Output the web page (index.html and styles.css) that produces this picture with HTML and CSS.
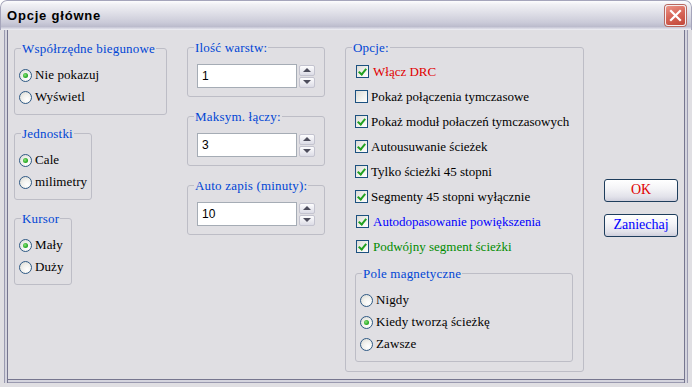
FILE: index.html
```html
<!DOCTYPE html>
<html lang="pl">
<head>
    <meta charset="UTF-8">
    <title>Opcje główne</title>
    <link rel="stylesheet" href="styles.css">
</head>
<body>
    <div class="window">
        <!-- Title bar -->
        <div class="title-bar">
            <span class="title-text">Opcje główne</span>
            <span class="close-button">
                <svg width="13" height="13" viewBox="0 0 13 13">
                    <path d="M2 2 L11 11 M11 2 L2 11" stroke="#fff" stroke-width="2.2" stroke-linecap="square"/>
                </svg>
            </span>
        </div>

        <div class="client">
            <!-- Left column -->
            <div class="column column-left">
                <fieldset class="group group-small group-polar">
                    <legend>Współrzędne biegunowe</legend>
                    <label class="radio-row"><span class="radio checked"></span>Nie pokazuj</label>
                    <label class="radio-row"><span class="radio"></span>Wyświetl</label>
                </fieldset>
                <fieldset class="group group-small group-units">
                    <legend>Jednostki</legend>
                    <label class="radio-row"><span class="radio checked"></span>Cale</label>
                    <label class="radio-row"><span class="radio"></span>milimetry</label>
                </fieldset>
                <fieldset class="group group-small group-cursor">
                    <legend>Kursor</legend>
                    <label class="radio-row"><span class="radio checked"></span>Mały</label>
                    <label class="radio-row"><span class="radio"></span>Duży</label>
                </fieldset>
            </div>

            <!-- Middle column -->
            <div class="column column-middle">
                <fieldset class="group group-spin">
                    <legend>Ilość warstw:</legend>
                    <div class="spin-row">
                        <input type="text" class="spin-input" value="1">
                        <div class="spin-buttons">
                            <span class="spin-button"><span class="arrow-up"></span></span>
                            <span class="spin-button"><span class="arrow-down"></span></span>
                        </div>
                    </div>
                </fieldset>
                <fieldset class="group group-spin">
                    <legend>Maksym. łączy:</legend>
                    <div class="spin-row">
                        <input type="text" class="spin-input" value="3">
                        <div class="spin-buttons">
                            <span class="spin-button"><span class="arrow-up"></span></span>
                            <span class="spin-button"><span class="arrow-down"></span></span>
                        </div>
                    </div>
                </fieldset>
                <fieldset class="group group-spin">
                    <legend>Auto zapis (minuty):</legend>
                    <div class="spin-row">
                        <input type="text" class="spin-input" value="10">
                        <div class="spin-buttons">
                            <span class="spin-button"><span class="arrow-up"></span></span>
                            <span class="spin-button"><span class="arrow-down"></span></span>
                        </div>
                    </div>
                </fieldset>
            </div>

            <!-- Options column -->
            <div class="column column-options">
                <fieldset class="group group-options">
                    <legend>Opcje:</legend>
                    <label class="check-row shifted text-red"><span class="checkbox checked"></span>Włącz DRC</label>
                    <label class="check-row"><span class="checkbox"></span>Pokaż połączenia tymczasowe</label>
                    <label class="check-row"><span class="checkbox checked"></span>Pokaż moduł połaczeń tymczasowych</label>
                    <label class="check-row"><span class="checkbox checked"></span>Autousuwanie ścieżek</label>
                    <label class="check-row"><span class="checkbox checked"></span>Tylko ścieżki 45 stopni</label>
                    <label class="check-row"><span class="checkbox checked"></span>Segmenty 45 stopni wyłącznie</label>
                    <label class="check-row shifted text-blue"><span class="checkbox checked"></span>Autodopasowanie powiększenia</label>
                    <label class="check-row shifted text-green"><span class="checkbox checked"></span>Podwójny segment ścieżki</label>

                    <fieldset class="group group-small group-magnet">
                        <legend>Pole magnetyczne</legend>
                        <label class="radio-row"><span class="radio"></span>Nigdy</label>
                        <label class="radio-row"><span class="radio checked"></span>Kiedy tworzą ścieżkę</label>
                        <label class="radio-row"><span class="radio"></span>Zawsze</label>
                    </fieldset>
                </fieldset>
            </div>

            <!-- Buttons -->
            <div class="column column-buttons">
                <button class="dialog-button text-red">OK</button>
                <button class="dialog-button text-blue">Zaniechaj</button>
            </div>
        </div>
    </div>
</body>
</html>
```

FILE: styles.css
```css
* {
    margin: 0;
    padding: 0;
    box-sizing: border-box;
}

body {
    width: 692px;
    height: 387px;
    overflow: hidden;
    background-color: #ffffff;
    font-family: "Liberation Serif", "Times New Roman", serif;
    font-size: 13px;
    color: #000;
}

.window {
    width: 692px;
    height: 387px;
    display: flex;
    flex-direction: column;
    border-radius: 7px 7px 0 0;
    overflow: hidden;
    background-color: #e0dfe3;
}

/* Title bar */
.title-bar {
    height: 30px;
    flex-shrink: 0;
    display: flex;
    align-items: center;
    justify-content: space-between;
    padding: 0 5px 1px 6px;
    background: linear-gradient(#fdfdfe 0%, #f0f0f4 12%, #e0e0e8 40%, #cacad8 75%, #bcbccd 88%, #d6d6e2 94%, #f2f2f6 100%);
    border: 1px solid #a5a5bb;
    border-bottom: none;
    border-radius: 7px 7px 0 0;
}

.title-text {
    font-family: "Liberation Sans", Arial, sans-serif;
    font-weight: bold;
    font-size: 13px;
    letter-spacing: 0.8px;
}

.close-button {
    width: 21px;
    height: 21px;
    display: flex;
    align-items: center;
    justify-content: center;
    border: 1px solid #f4eeee;
    border-radius: 3px;
    background: linear-gradient(160deg, #eb9487 0%, #d8685a 45%, #c24638 100%);
    box-shadow: 0 0 0 1px #b86860;
}

/* Client area */
.client {
    flex: 1;
    display: flex;
    align-items: flex-start;
    gap: 20px;
    padding: 10px 0 0 10px;
    border-left: 4px solid transparent;
    border-right: 4px solid transparent;
    border-bottom: 4px solid transparent;
    box-shadow: inset 1px 0 #9a9ab0, inset 3px 0 #d4d4de, inset 4px 0 #76768f,
                inset -1px 0 #9a9ab0, inset -3px 0 #d4d4de, inset -4px 0 #76768f,
                inset 0 -1px #9a9ab0, inset 0 -3px #d4d4de, inset 0 -4px #76768f;
}

.column {
    display: flex;
    flex-direction: column;
    align-items: flex-start;
}

.column-left {
    width: 153px;
    margin-top: 1px;
    gap: 11px;
}

.column-middle {
    width: 138px;
    gap: 12px;
}

.column-options {
    width: 239px;
}

.column-buttons {
    width: 74px;
    align-self: stretch;
    justify-content: center;
    gap: 12px;
    padding-bottom: 8px;
}

/* Group boxes */
.group {
    border: 1px solid #bdbdc6;
    border-radius: 3px;
    min-width: 0;
}

.group legend {
    color: #0046d5;
    font-size: 13px;
    line-height: 15px;
    padding: 0 1px;
    letter-spacing: 0.2px;
}

.group-small {
    padding: 8px 4px 6px 4px;
}

.group-small legend {
    margin-left: 2px;
}

.group-polar {
    width: 153px;
}

.group-units {
    width: 78px;
}

.group-cursor {
    width: 58px;
}

.group-spin {
    width: 138px;
    padding: 9px 9px 8px 9px;
}

.group-spin legend,
.group-options legend {
    margin-left: -3px;
}

.group-options {
    width: 239px;
    padding: 4px 10px 9px 9px;
}

.group-magnet {
    width: 218px;
    margin-top: 7px;
}

.group-magnet legend {
    margin-left: 2px;
}

/* Radio buttons */
.radio-row {
    height: 22px;
    display: flex;
    align-items: center;
    gap: 3px;
    font-size: 13px;
    letter-spacing: 0.1px;
    white-space: nowrap;
}

.radio {
    width: 13px;
    height: 13px;
    flex-shrink: 0;
    border-radius: 50%;
    border: 1px solid #2f5a85;
    background: radial-gradient(circle at 65% 70%, #ffffff 0%, #f2f2ee 45%, #d6d6d0 100%);
    display: flex;
    align-items: center;
    justify-content: center;
}

.radio.checked::after {
    content: "";
    width: 5px;
    height: 5px;
    border-radius: 50%;
    background: radial-gradient(circle at 40% 40%, #8ee27e 0%, #2fb02a 55%, #148a14 100%);
}

/* Check boxes */
.check-row {
    height: 25px;
    display: flex;
    align-items: center;
    gap: 3px;
    font-size: 13px;
    white-space: nowrap;
}

.check-row.shifted {
    padding-left: 1px;
    gap: 4px;
}

.checkbox {
    width: 13px;
    height: 13px;
    flex-shrink: 0;
    border: 1px solid #1c5180;
    background: linear-gradient(135deg, #dcdcd7 0%, #f3f3ef 60%, #ffffff 100%);
    position: relative;
}

.checkbox.checked::after {
    content: "";
    position: absolute;
    left: 3px;
    top: 1px;
    width: 3px;
    height: 6px;
    border-right: 2px solid #21a121;
    border-bottom: 2px solid #21a121;
    transform: rotate(40deg);
}

.text-red {
    color: #e00000;
}

.text-blue {
    color: #0000ff;
}

.text-green {
    color: #008c00;
}

/* Spin inputs */
.spin-row {
    display: flex;
    align-items: center;
    gap: 2px;
}

.spin-input {
    width: 100px;
    height: 24px;
    border: 1px solid #a5acb5;
    background-color: #fff;
    padding: 0 4px;
    font-family: "Liberation Sans", Arial, sans-serif;
    font-size: 12px;
    color: #000;
    outline: none;
}

.spin-buttons {
    display: flex;
    flex-direction: column;
    gap: 1px;
}

.spin-button {
    width: 16px;
    height: 11px;
    border: 1px solid #c3c3cf;
    border-radius: 2px;
    background: linear-gradient(#fdfdfe, #dcdce6);
    display: flex;
    align-items: center;
    justify-content: center;
}

.arrow-up {
    width: 0;
    height: 0;
    border-left: 4px solid transparent;
    border-right: 4px solid transparent;
    border-bottom: 4px solid #4d4d5c;
}

.arrow-down {
    width: 0;
    height: 0;
    border-left: 4px solid transparent;
    border-right: 4px solid transparent;
    border-top: 4px solid #4d4d5c;
}

/* Dialog buttons */
.dialog-button {
    width: 74px;
    height: 23px;
    border: 1px solid #1e3d5c;
    border-radius: 3px;
    background: linear-gradient(#ffffff 0%, #f4f4f7 40%, #e2e2ea 80%, #cfcfdc 100%);
    font-family: "Liberation Serif", "Times New Roman", serif;
    font-size: 14px;
    cursor: pointer;
}
```
